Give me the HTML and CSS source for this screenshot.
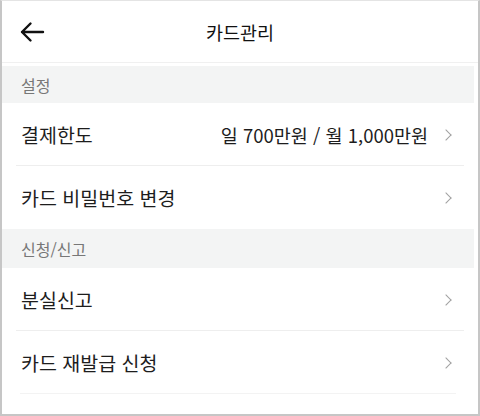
FILE: index.html
```html
<!DOCTYPE html>
<html lang="ko">
<head>
    <meta charset="UTF-8">
    <meta name="viewport" content="width=device-width, initial-scale=1.0">
    <title>카드관리</title>
    <link rel="stylesheet" href="styles.css">
</head>
<body>

<div class="screen">
    <header class="topbar">
        <button class="back" aria-label="뒤로">
            <svg width="26" height="22" viewBox="0 0 26 22">
                <path d="M24 11H3M11.5 2.5L3 11l8.5 8.5" fill="none" stroke="#111" stroke-width="2.4" stroke-linecap="round" stroke-linejoin="round"/>
            </svg>
        </button>
        <h1>카드관리</h1>
    </header>

    <div class="section first">설정</div>
    <div class="row line">
        <span class="label">결제한도</span>
        <span class="value">일 700만원 / 월 1,000만원</span>
        <span class="chev"></span>
    </div>
    <div class="row">
        <span class="label">카드 비밀번호 변경</span>
        <span class="chev"></span>
    </div>

    <div class="section">신청/신고</div>
    <div class="row line">
        <span class="label">분실신고</span>
        <span class="chev"></span>
    </div>
    <div class="row line faint">
        <span class="label">카드 재발급 신청</span>
        <span class="chev"></span>
    </div>
</div>

</body>
</html>
```

FILE: styles.css
```css
* {
    box-sizing: border-box;
}

body {
    margin: 0;
    padding: 0;
    font-family: "Noto Sans CJK KR", "Noto Sans", sans-serif;
    background: #fff;
}

.screen {
    width: 480px;
    height: 416px;
    border: 2px solid #c6c6c6;
    border-top: 1px solid #e4e4e4;
    overflow: hidden;
}

.topbar {
    height: 62px;
    border-bottom: 1px solid #f0f0f0;
    display: flex;
    align-items: center;
    justify-content: center;
    position: relative;
}

.topbar h1 {
    margin: 0;
    font-size: 18.5px;
    font-weight: 400;
    color: #111;
}

.back {
    position: absolute;
    left: 17px;
    top: 20px;
    border: none;
    background: none;
    padding: 0;
}

.section {
    height: 39px;
    background: #f3f4f4;
    margin-right: 4px;
    padding-left: 19px;
    display: flex;
    align-items: center;
    font-size: 16px;
    color: #777;
}

.section.first {
    margin-top: 3px;
    height: 37px;
}

.row {
    height: 63px;
    display: flex;
    align-items: center;
    padding: 0 24px 0 19px;
    position: relative;
}

.row.line::after {
    content: "";
    position: absolute;
    left: 14px;
    right: 14px;
    bottom: 0;
    height: 1px;
    background: #eeeeee;
}

.row.faint::after {
    left: 18px;
    right: 22px;
    background: #f3f3f3;
}

.label {
    font-size: 19.5px;
    color: #1d1d1d;
    flex: 1;
}

.value {
    font-size: 18.5px;
    color: #1d1d1d;
    margin-right: 14px;
}

.chev {
    width: 8px;
    height: 8px;
    border-top: 1.2px solid #a0a0a0;
    border-right: 1.2px solid #a0a0a0;
    transform: rotate(45deg);
    margin-right: 4px;
}
```
